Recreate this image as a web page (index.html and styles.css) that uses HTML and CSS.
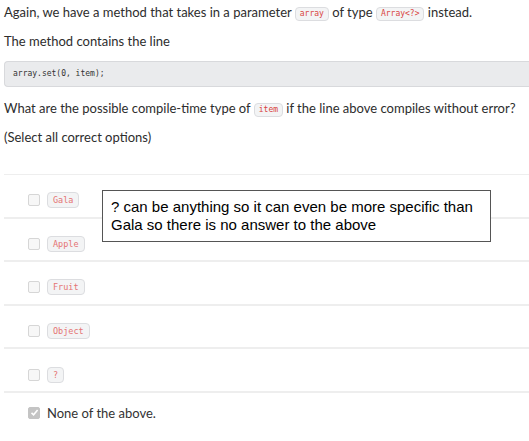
FILE: index.html
```html
<!DOCTYPE html>
<html>
<head>
<meta charset="utf-8">
<link rel="stylesheet" href="styles.css">
</head>
<body>
<div class="page">
  <p class="para first">Again, we have a method that takes in a parameter <code class="pill">array</code> of type <code class="pill">Array&lt;?&gt;</code> instead.</p>
  <p class="para">The method contains the line</p>
  <pre class="codeblock">array.set(0, item);</pre>
  <p class="para">What are the possible compile-time type of <code class="pill">item</code> if the line above compiles without error?</p>
  <p class="para">(Select all correct options)</p>
  <div class="options">
    <div class="option"><span class="box"></span><code class="pill opt">Gala</code></div>
    <div class="option"><span class="box"></span><code class="pill opt">Apple</code></div>
    <div class="option"><span class="box"></span><code class="pill opt">Fruit</code></div>
    <div class="option"><span class="box"></span><code class="pill opt">Object</code></div>
    <div class="option"><span class="box"></span><code class="pill opt">?</code></div>
    <div class="option last"><span class="box checked"><svg width="9" height="9" viewBox="0 0 9 9"><path d="M1.5 4.8 L3.6 6.8 L7.6 2" fill="none" stroke="#fff" stroke-width="1.6"/></svg></span><span class="none">None of the above.</span></div>
  </div>
  <div class="note">? can be anything so it can even be more specific than Gala so there is no answer to the above</div>
</div>
</body>
</html>
```
FILE: styles.css
```css
html, body {
  margin: 0;
  padding: 0;
  overflow: hidden;
  background: #fff;
}
.page {
  position: relative;
  width: 529px;
  padding-left: 4px;
  box-sizing: border-box;
  font-family: Lato, "Open Sans", sans-serif;
  font-size: 13px;
  color: #2d2d2d;
}
.para {
  margin: 0 0 12px 0;
  line-height: 16px;
}
.para.first {
  padding-top: 4px;
}
.pill {
  display: inline-block;
  font-family: "DejaVu Sans Mono", monospace;
  font-size: 8px;
  line-height: 12px;
  color: #d9433f;
  background: #f3f4f5;
  border: 1px solid #dcdde0;
  border-radius: 4px;
  padding: 0 4px;
  vertical-align: 1px;
}
.codeblock {
  margin: 8px -4px 13px 0;
  height: 26px;
  box-sizing: border-box;
  padding: 0 8px;
  line-height: 24px;
  background: #eaebed;
  border: 1px solid #d8d9dc;
  border-right: none;
  border-radius: 4px 0 0 4px;
  font-family: "DejaVu Sans Mono", monospace;
  font-size: 8px;
  color: #333;
}
.options {
  margin: 29px -4px 0 0;
  border-top: 1px solid #eeeeee;
}
.option {
  display: flex;
  align-items: center;
  gap: 7px;
  height: 43.6px;
  box-sizing: border-box;
  padding: 9px 0 0 24px;
  border-bottom: 2px solid #eeeeee;
}
.option.last {
  border-bottom: none;
  padding-top: 0;
  height: 40px;
}
.box {
  width: 10px;
  height: 10px;
  border: 1px solid #d6d6d6;
  border-radius: 2px;
  background: #f7f7f7;
  display: flex;
  align-items: center;
  justify-content: center;
  flex: none;
}
.box.checked {
  background: #c4c4c4;
  border-color: #c4c4c4;
}
.pill.opt {
  color: #e57373;
  font-size: 8.5px;
  line-height: 14px;
  padding: 0 5px;
  vertical-align: 0;
}
.none {
  color: #333;
}
.note {
  position: absolute;
  left: 102px;
  top: 190px;
  width: 389px;
  height: 52px;
  box-sizing: border-box;
  padding: 7px 8px;
  background: #fff;
  border: 1px solid #555;
  font-family: "Liberation Sans", Arial, sans-serif;
  font-size: 15px;
  line-height: 18px;
  color: #000;
}
```
